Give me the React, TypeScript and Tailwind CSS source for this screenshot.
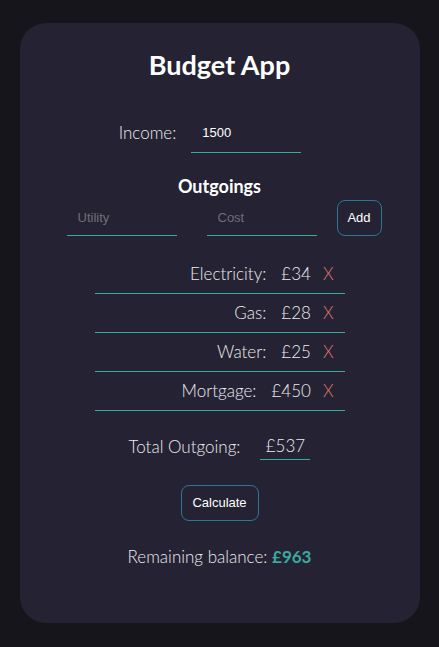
import React, { useState } from "react";

type Item = { name: string; cost: number };

const App = () => {
  const [items] = useState<Item[]>([
    { name: "Electricity", cost: 34 },
    { name: "Gas", cost: 28 },
    { name: "Water", cost: 25 },
    { name: "Mortgage", cost: 450 },
  ]);
  const total = items.reduce((s, i) => s + i.cost, 0);

  return (
    <div className="min-h-screen bg-[#16151b] pt-[23px] pb-[24px] font-['Lato',sans-serif] text-[#ebeaf0]">
      <div className="mx-auto w-[400px] h-[600px] rounded-[26px] bg-[#252333] flex flex-col items-center pt-[26px]">
        {/* Title */}
        <h1 className="text-[27px] leading-[32px] font-bold text-white">Budget App</h1>

        {/* Income */}
        <div className="mt-[41px] mr-[19px] flex items-center gap-[15px]">
          <span className="text-[17px] leading-[20px] font-light pb-[9px]">Income:</span>
          <input
            defaultValue="1500"
            className="w-[110px] h-[31px] pb-[9px] bg-transparent border-b border-[#3aa99f] pl-[11px] text-[13px] text-white outline-none font-['Liberation_Sans',Arial,sans-serif]"
          />
        </div>

        {/* Outgoings */}
        <h2 className="mt-[21px] text-[18px] leading-[24px] font-bold text-white">Outgoings</h2>
        <div className="mt-[2px] pl-[9px] flex items-center">
          <input
            placeholder="Utility"
            className="w-[110px] h-[36px] bg-transparent border-b border-[#3aa99f] pl-[11px] text-[13px] text-white placeholder:text-[#6f6e78] outline-none font-['Liberation_Sans',Arial,sans-serif]"
          />
          <input
            placeholder="Cost"
            className="ml-[30px] w-[110px] h-[36px] bg-transparent border-b border-[#3aa99f] pl-[11px] text-[13px] text-white placeholder:text-[#6f6e78] outline-none font-['Liberation_Sans',Arial,sans-serif]"
          />
          <button className="ml-[20px] w-[45px] h-[36px] rounded-[8px] border border-[#2a7694] text-[13px] text-white font-['Liberation_Sans',Arial,sans-serif]">
            Add
          </button>
        </div>

        {/* List */}
        <ul className="mt-[19px] w-[250px]">
          {items.map((item) => (
            <li
              key={item.name}
              className="h-[39px] border-b border-[#3aa99f] flex items-center justify-end pr-[11px] text-[17px] font-light"
            >
              <span>{item.name}:</span>
              <span className="ml-[15px]">£{item.cost}</span>
              <span className="ml-[12px] text-[#e0776b]">X</span>
            </li>
          ))}
        </ul>

        {/* Total */}
        <div className="mt-[22px] flex items-center gap-[20px]">
          <span className="text-[17px] font-light">Total Outgoing:</span>
          <div className="w-[50px] h-[27px] border-b border-[#3aa99f] flex items-center justify-center text-[17px] font-light">
            £{total}
          </div>
        </div>

        <button className="mt-[25px] w-[78px] h-[36px] rounded-[8px] border border-[#2a7694] text-[13px] text-white font-['Liberation_Sans',Arial,sans-serif]">
          Calculate
        </button>

        <p className="mt-[24px] text-[17px] leading-[24px] font-light">
          Remaining balance: <span className="font-bold text-[#3aa99f]">£{1500 - total}</span>
        </p>
      </div>
    </div>
  );
};

export default App;
